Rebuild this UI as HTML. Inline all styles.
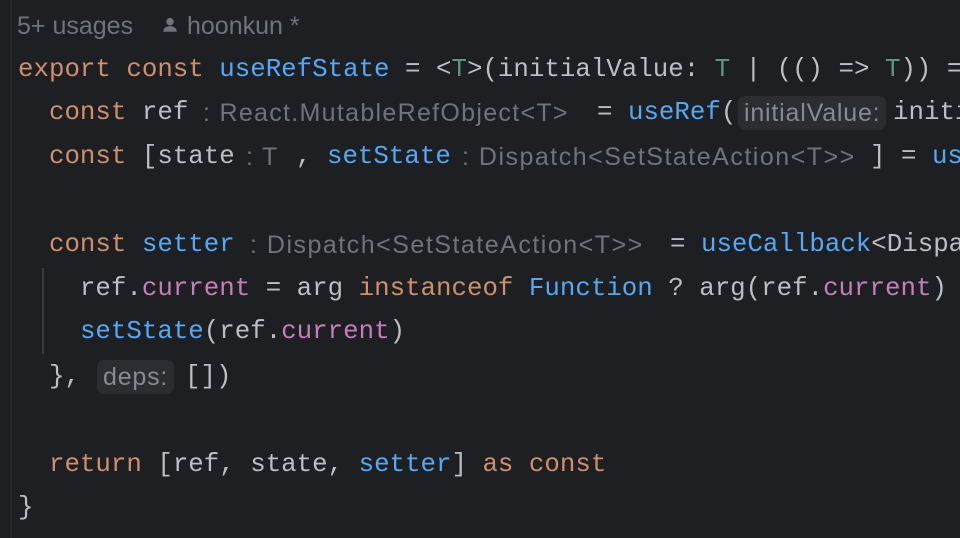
<!DOCTYPE html>
<html><head><meta charset="utf-8"><style>
html,body{margin:0;padding:0;}
body{width:960px;height:538px;background:#1e1f22;position:relative;overflow:hidden;}
.l{position:absolute;white-space:pre;line-height:30px;font-family:"Liberation Mono",monospace;font-size:25.8px;color:#bcbec4;}
.h{position:absolute;white-space:pre;line-height:30px;font-family:"Liberation Sans",sans-serif;font-size:25px;letter-spacing:1.3px;color:#6f737a;}
.box{position:absolute;height:34px;line-height:34px;background:#2b2d30;border-radius:7px;color:#868a91;font-family:"Liberation Sans",sans-serif;font-size:25px;letter-spacing:0.8px;padding:0 6px;white-space:pre;}
.k{color:#cf8e6d}.f{color:#56a8f5}.p{color:#c77dbb}.t{color:#5f9482}
</style></head><body>
<div style="position:absolute;left:10px;top:0;width:2px;height:538px;background:#26282c"></div>
<div style="position:absolute;left:42px;top:268px;width:2px;height:86px;background:#393b40"></div>

<div class="h" style="left:17px;top:11px;letter-spacing:0">5+ usages</div>
<svg style="position:absolute;left:161px;top:16px" width="18" height="18" viewBox="0 0 16 16"><circle cx="8" cy="5" r="3.3" fill="#6f737a"/><path d="M2 14c0-3.5 2.8-5 6-5s6 1.5 6 5z" fill="#6f737a"/></svg>
<div class="h" style="left:187px;top:11px;letter-spacing:0">hoonkun *</div>

<div class="l" style="left:18px;top:55px"><span class="k">export const </span><span class="f">useRefState</span> = &lt;<span class="t">T</span>&gt;(initialValue: <span class="t">T</span> | (() =&gt; <span class="t">T</span>)) =</div>

<div class="l" style="left:18px;top:98px">  <span class="k">const</span> ref</div>
<div class="h" style="left:203px;top:98px">: React.MutableRefObject&lt;T&gt;</div>
<div class="l" style="left:597px;top:98px">= <span class="f">useRef</span>(</div>
<div class="box" style="left:738px;top:96px">initialValue:</div>
<div class="l" style="left:893px;top:98px">initi</div>

<div class="l" style="left:18px;top:142px">  <span class="k">const</span> [state</div>
<div class="h" style="left:246px;top:142px">: T</div>
<div class="l" style="left:296px;top:142px">, <span class="f">setState</span></div>
<div class="h" style="left:462px;top:142px;letter-spacing:1.5px">: Dispatch&lt;SetStateAction&lt;T&gt;&gt;</div>
<div class="l" style="left:870px;top:142px">] = <span class="f">us</span></div>

<div class="l" style="left:18px;top:230px">  <span class="k">const</span> <span class="f">setter</span></div>
<div class="h" style="left:250px;top:230px;letter-spacing:1.5px">: Dispatch&lt;SetStateAction&lt;T&gt;&gt;</div>
<div class="l" style="left:670px;top:230px">= <span class="f">useCallback</span>&lt;Dispa</div>

<div class="l" style="left:18px;top:274px">    ref.<span class="p">current</span> = arg <span class="k">instanceof</span> <span class="f">Function</span> ? arg(ref.<span class="p">current</span>)</div>
<div class="l" style="left:18px;top:317px">    <span class="f">setState</span>(ref.<span class="p">current</span>)</div>
<div class="l" style="left:18px;top:362px">  },</div>
<div class="box" style="left:97px;top:360px">deps:</div>
<div class="l" style="left:185px;top:362px">[])</div>

<div class="l" style="left:18px;top:450px">  <span class="k">return</span> [ref, state, <span class="f">setter</span>] <span class="k">as const</span></div>
<div class="l" style="left:18px;top:493px">}</div>
</body></html>
